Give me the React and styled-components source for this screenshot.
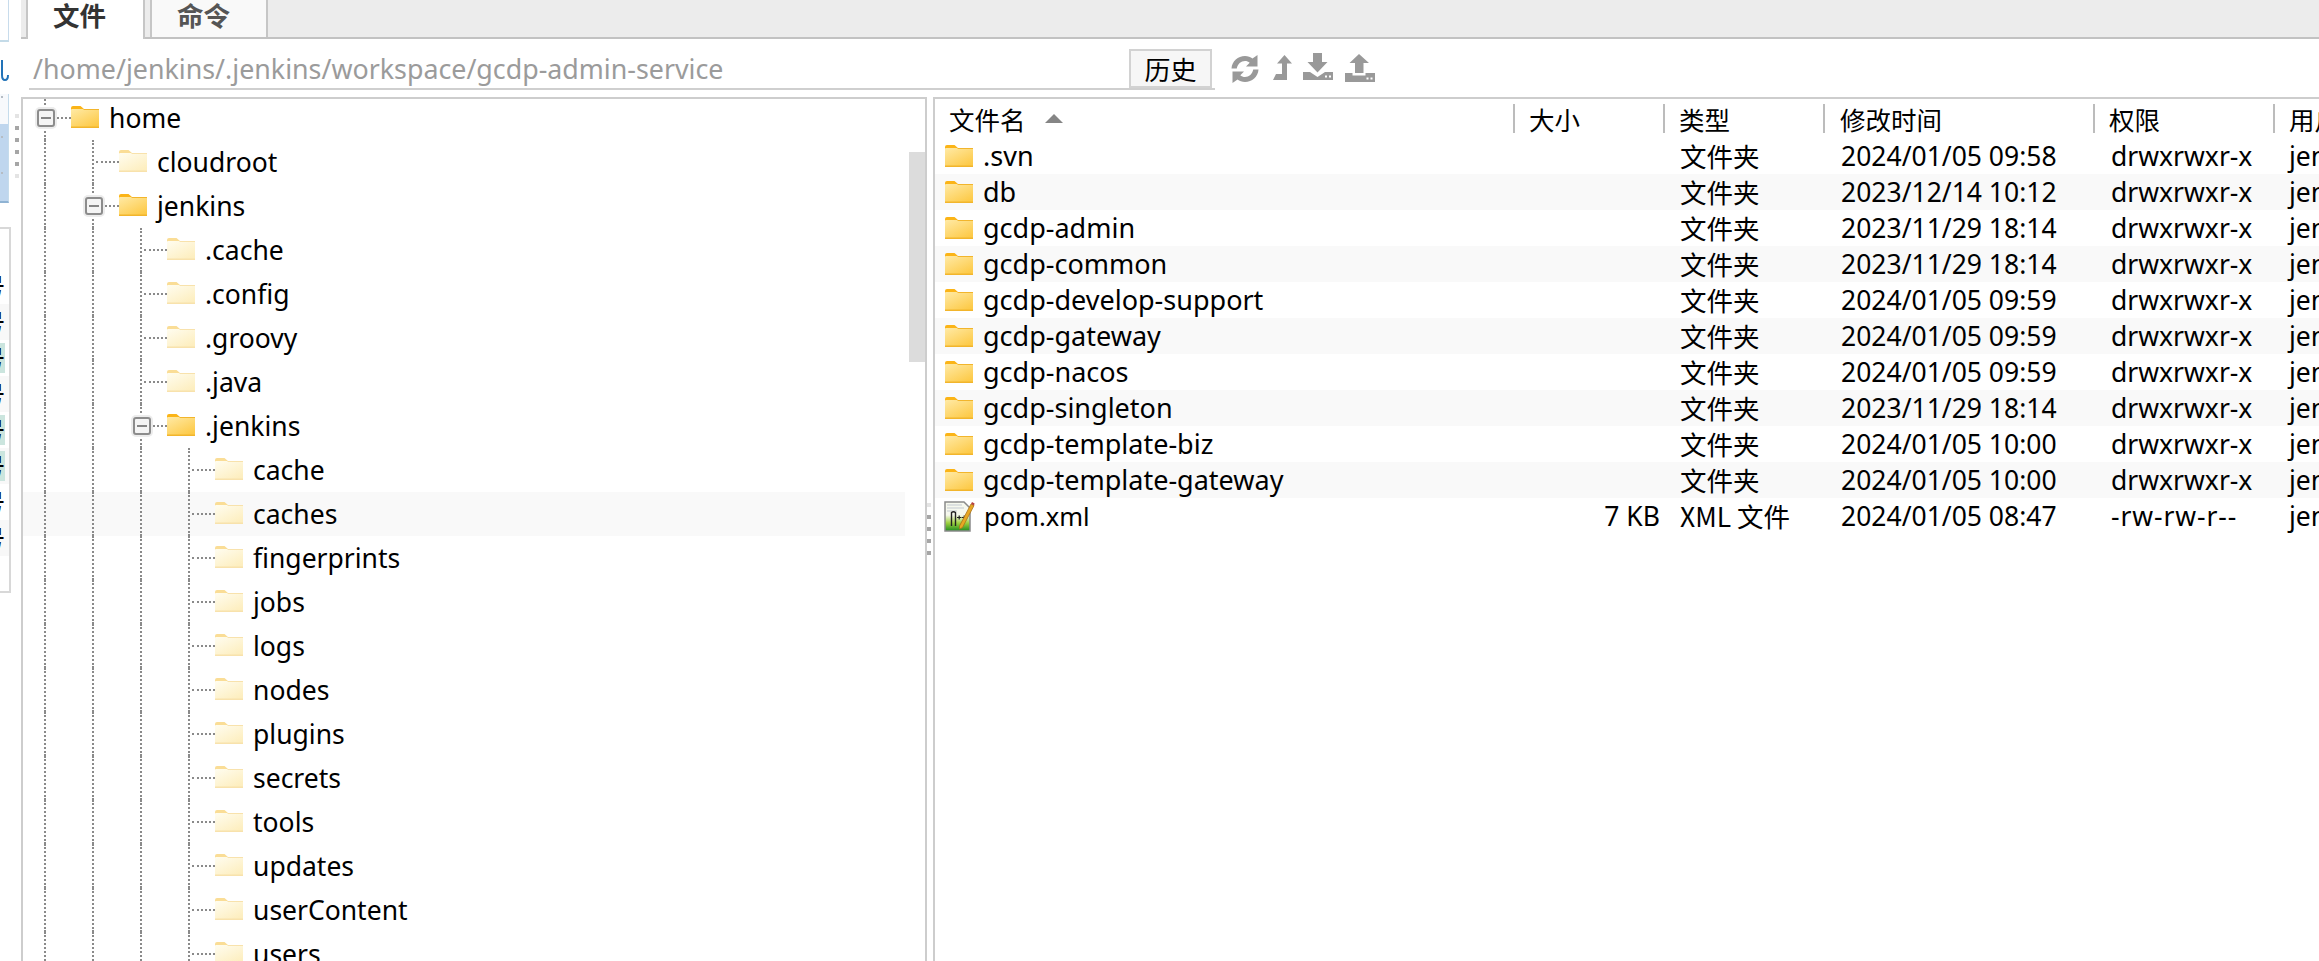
import React from 'react'
import styled, { createGlobalStyle } from 'styled-components'

const FONT = `"Noto Sans", "Noto Sans CJK SC", sans-serif`
const CJK = `"Noto Sans CJK SC", "Noto Sans", sans-serif`

const GlobalStyle = createGlobalStyle`
  html, body { margin: 0; padding: 0; height: 100%; overflow: hidden; background: #fff; }
  #root { height: 100%; }
`

const Shell = styled.div`
  display: flex;
  width: 2319px;
  height: 961px;
  overflow: hidden;
  background: #fff;
  font-family: ${FONT};
  color: #000;
`

// cut-off neighbour panel on the far left
const Strip = styled.aside`
  flex: none;
  width: 21px;
  display: flex;
`
const StripCol = styled.div`
  width: 11px;
  display: flex;
  flex-direction: column;
`
const TopCap = styled.div`
  width: 9px;
  height: 42px;
  box-sizing: border-box;
  border-bottom: 2px solid #c4dbe8;
  border-right: 1px solid #c8dcec;
`
const CutGlyph = styled.svg`
  display: block;
  margin-top: 18px;
  width: 9px;
  height: 22px;
`
const BluePanel = styled.div`
  position: relative;
  margin-top: 12px;
  width: 9px;
  height: 109px;
  box-sizing: border-box;
  background: linear-gradient(#f7f9fc 0 30px, #bfd6ee 30px);
  border-bottom: 2px solid #8fb3d3;
  border-right: 1px solid #c5dcec;
`
const Tick = styled.i`
  position: absolute;
  left: 1px;
  top: ${p => p.$top}px;
  width: 2px;
  height: 2px;
  background: #b5bcc4;
`
const CutList = styled.div`
  margin-top: 24px;
  width: 11px;
  height: 366px;
  box-sizing: border-box;
  padding-top: 39px;
  border: solid #d8d8d8;
  border-width: 2px 2px 2px 0;
  overflow: hidden;
`
const CutRow = styled.div`
  height: 36px;
  display: flex;
  align-items: center;
  justify-content: flex-end;
  overflow: hidden;
  font: 500 24px/30px ${CJK};
  background: ${p => (p.$odd ? '#f8f8f8' : '#fff')};
`
const CutText = styled.span`
  flex: none;
  margin-right: 4px;
  background: ${p => (p.$mark ? '#cbe5de' : 'transparent')};
`
const Grip = styled.div`
  display: flex;
  flex-direction: column;
  gap: 8px;
  margin: ${p => p.$top}px 0 0 ${p => p.$left}px;
`
const GripDot = styled.i`
  display: block;
  width: 4px;
  height: 4px;
  background: ${p => (p.$faint ? '#e4e4e4' : '#a6a6a6')};
`

const Main = styled.main`
  flex: 1;
  min-width: 0;
  display: flex;
  flex-direction: column;
`

const TabBar = styled.div`
  flex: none;
  height: 39px;
  box-sizing: border-box;
  display: flex;
  gap: 5px;
  padding-left: 5px;
  background: #ececec;
  border-bottom: 2px solid #c2c2c2;
`
const Tab = styled.div`
  width: ${p => p.$width}px;
  height: ${p => (p.$active ? 39 : 37)}px;
  box-sizing: border-box;
  padding-left: 25px;
  background: ${p => (p.$active ? '#fff' : '#f9f9f9')};
  border: solid #c6c6c6;
  border-width: 0 2px;
  ${p => (p.$active ? '' : 'border-bottom-width: 0;')}
  font: 700 26.5px/30px ${CJK};
  color: ${p => (p.$active ? '#333' : '#555')};
`

const PathRow = styled.div`
  flex: none;
  height: 58px;
  box-sizing: border-box;
  padding: 10px 0 0 8px;
  display: flex;
  align-items: flex-start;
`
const PathField = styled.div`
  width: 1186px;
  height: 41px;
  box-sizing: border-box;
  display: flex;
  align-items: center;
  padding: 0 3px 0 4px;
  border-bottom: 2px solid #cfcfcf;
`
const PathText = styled.span`
  flex: 1;
  font-size: 26.8px;
  line-height: 38px;
  color: #9b9b9b;
`
const HistoryBtn = styled.button`
  width: 83px;
  height: 39px;
  box-sizing: border-box;
  padding: 0;
  background: #f6f6f6;
  border: 2px solid #d2d2d2;
  font: 26px/32px ${CJK};
  color: #000;
`
const Tools = styled.div`
  display: flex;
  align-items: flex-start;
  margin: 6px 0 0 16px;
  color: #999;
`
const ToolIcon = styled.svg`
  display: block;
  flex: none;
  margin: ${p => p.$top}px 0 0 ${p => p.$left}px;
  fill: currentColor;
`

const Panes = styled.div`
  flex: 1;
  min-height: 0;
  display: flex;
`
const TreePane = styled.section`
  position: relative;
  flex: none;
  width: 906px;
  box-sizing: border-box;
  overflow: hidden;
  border: solid #cdcdcd;
  border-width: 2px 2px 0 2px;
`
const TreeRows = styled.div`
  margin-top: -3px;
  width: 882px;
`
const TreeRow = styled.div`
  height: 44px;
  box-sizing: border-box;
  display: flex;
  padding-left: 21px;
  background: ${p => (p.$hover ? '#f9f9f9' : 'transparent')};
`
const Guide = styled.span`
  flex: none;
  width: 48px;
  box-sizing: border-box;
  border-left: 2px dotted #8a8a8a;
`
const Node = styled.span`
  position: relative;
  flex: none;
  width: 27px;
  box-sizing: border-box;
  display: flex;
  align-items: center;
  border-left: 2px dotted #8a8a8a;
`
const Connector = styled.span`
  flex: none;
  width: 23px;
  margin-left: 2px;
  border-top: 2px dotted #8a8a8a;
`
const Toggle = styled.span`
  position: absolute;
  left: -9px;
  top: 13px;
  width: 18px;
  height: 18px;
  box-sizing: border-box;
  display: flex;
  align-items: center;
  justify-content: center;
  background: #f4f4f4;
  border: 2px solid #8c8c8c;
  border-radius: 3px;
  box-shadow: 0 0 0 2px #ececec;
  &::before {
    content: '';
    width: 10px;
    height: 2px;
    background: #858585;
  }
`
const TreeLabel = styled.span`
  margin-left: 10px;
  font-size: 26.5px;
  line-height: 44px;
  white-space: nowrap;
`
const TreeFolder = styled.span`
  flex: none;
  display: flex;
  align-items: center;
  margin-top: -3px;
`
const ScrollThumb = styled.div`
  position: absolute;
  right: 0;
  top: 53px;
  width: 16px;
  height: 210px;
  background: #dcdcdc;
`

const Splitter = styled.div`
  flex: none;
  width: 6px;
  display: flex;
  flex-direction: column;
  justify-content: center;
  gap: 8px;
`

const ListPane = styled.section`
  flex: 1;
  min-width: 0;
  box-sizing: border-box;
  overflow: hidden;
  border: solid #cdcdcd;
  border-width: 2px 0 0 2px;
`
const columns = '578px 150px 160px 270px 180px 46px'
const HeaderRow = styled.div`
  height: 39px;
  display: grid;
  grid-template-columns: ${columns};
  align-items: center;
`
const HeadCell = styled.div`
  height: 29px;
  box-sizing: border-box;
  display: flex;
  align-items: center;
  gap: 19px;
  padding-left: ${p => p.$pad}px;
  border-left: ${p => (p.$first ? 'none' : '2px solid #bcbcbc')};
  font: 25.5px/26px ${CJK};
  white-space: nowrap;
`
const SortArrow = styled.span`
  width: 0;
  height: 0;
  border: solid transparent;
  border-width: 0 9.5px 9px;
  border-bottom-color: #858585;
`
const FileRow = styled.div`
  height: 36px;
  display: grid;
  grid-template-columns: ${columns};
  align-items: center;
  background: ${p => (p.$odd ? '#f9f9f9' : '#fff')};
`
const NameCell = styled.div`
  display: flex;
  align-items: center;
  gap: ${p => (p.$file ? 9 : 10)}px;
  padding-left: ${p => (p.$file ? 9 : 10)}px;
  font-size: ${p => (p.$file ? 25.5 : 27)}px;
  line-height: 36px;
  white-space: nowrap;
`
const SizeCell = styled.div`
  padding-right: 3px;
  text-align: right;
  font-size: 26.5px;
  line-height: 36px;
`
const TextCell = styled.div`
  padding-left: ${p => p.$pad}px;
  font-size: 26.5px;
  line-height: 36px;
  letter-spacing: ${p => p.$track || 0}px;
  white-space: nowrap;
  overflow: hidden;
`
const TypeText = styled.span`
  font-family: ${CJK};
`

function Folder({ dim }) {
  const id = dim ? 'folderDim' : 'folderFull'
  const tab = dim ? '#fadd96' : '#fbb417'
  const from = dim ? '#fffdf0' : '#ffeaa6'
  const to = dim ? '#fdeebf' : '#fdca48'
  const edge = dim ? '#f8e2ac' : '#f2b52c'
  return (
    <svg width="28" height="22" viewBox="0 0 28 22" style={{ display: 'block', flex: 'none' }}>
      <defs>
        <linearGradient id={id} x1="0" y1="0" x2="0.7" y2="1">
          <stop offset="0" stopColor={from} />
          <stop offset="1" stopColor={to} />
        </linearGradient>
      </defs>
      <path d="M0 2Q0 0 2 0H9.5L13 3H28V6H0Z" fill={tab} />
      <rect y="3" x="0" width="28" height="19" rx="1" fill={`url(#${id})`} />
      <path d="M13 3H28V4H12Z" fill={edge} />
      <rect y="20.5" width="28" height="1.5" fill={edge} />
    </svg>
  )
}

function XmlIcon() {
  return (
    <svg width="31" height="33" viewBox="0 0 31 33" style={{ display: 'block', flex: 'none' }}>
      <defs>
        <linearGradient id="xmlPage" x1="0" y1="0" x2="0" y2="1">
          <stop offset="0.45" stopColor="#f6f8ee" />
          <stop offset="0.72" stopColor="#9fd13f" />
          <stop offset="1" stopColor="#1f8c1f" />
        </linearGradient>
      </defs>
      <path d="M1 2H20L26 8V31H1Z" fill="url(#xmlPage)" stroke="#8b8b8b" strokeWidth="1.5" />
      <path d="M3 5H18M3 8H20M3 11H13" stroke="#c3c9d1" strokeWidth="1" />
      <path d="M7.5 26V12.5Q9.5 11 11.5 12.5V26" fill="none" stroke="#222" strokeWidth="1.4" />
      <path d="M13 17.5H17.5M15.2 15.5V19.5M18 17.5H22.5M20.2 15.5V19.5" stroke="#222" strokeWidth="1.2" />
      <path d="M15.5 26L27 4L30 5.6L18.5 27.5L15.6 29Z" fill="#e8a723" stroke="#a9741a" strokeWidth="0.8" />
      <path d="M27 4L28 2L30.6 3.5L30 5.6Z" fill="#b8433f" />
    </svg>
  )
}

function RefreshIcon() {
  return (
    <ToolIcon $left={0} $top={0} width="28" height="28" viewBox="0 0 28 28" aria-label="refresh">
      <path d="M0.5 13.5C1 6 7 1 14 1C17 1 19.5 2 21.5 3.5L26.5 0V11.5H15L18.7 7.8C17.4 6.6 15.8 6 14 6C10 6 6.5 9 5.8 13.5Z" />
      <path d="M27.5 14.5C27 22 21 27 14 27C11 27 8.5 26 6.5 24.5L1.5 28V16.5H13L9.3 20.2C10.6 21.4 12.2 22 14 22C18 22 21.5 19 22.2 14.5Z" />
    </ToolIcon>
  )
}

function UpIcon() {
  return (
    <ToolIcon $left={14} $top={0} width="19" height="25" viewBox="0 0 19 25" aria-label="up">
      <path d="M11.5 0L19 8.5H14V25H0L3 19H9V8.5H4Z" />
    </ToolIcon>
  )
}

function DownloadIcon() {
  return (
    <ToolIcon $left={11} $top={-2} width="30" height="27" viewBox="0 0 30 27" aria-label="download">
      <path d="M10 0H19V9H24.5L14.5 19.5L4.5 9H10Z" />
      <path fillRule="evenodd" d="M0 19H7L14.5 24L22 19H30V27H0ZM22 22.5H24V24.5H22ZM26 22.5H28V24.5H26Z" />
    </ToolIcon>
  )
}

function UploadIcon() {
  return (
    <ToolIcon $left={12} $top={-1} width="30" height="28" viewBox="0 0 30 28" aria-label="upload">
      <path d="M14 0L24 9H18.5V19H10V9H4.5Z" />
      <path fillRule="evenodd" d="M0 19H7.5V21.5H20.5V19H30V28H0ZM21.5 23.5H23.5V25.5H21.5ZM25.5 23.5H27.5V25.5H25.5Z" />
    </ToolIcon>
  )
}

const treeNodes = [
  { name: 'home', depth: 0, open: true },
  { name: 'cloudroot', depth: 1, dim: true },
  { name: 'jenkins', depth: 1, open: true },
  { name: '.cache', depth: 2, dim: true },
  { name: '.config', depth: 2, dim: true },
  { name: '.groovy', depth: 2, dim: true },
  { name: '.java', depth: 2, dim: true },
  { name: '.jenkins', depth: 2, open: true },
  { name: 'cache', depth: 3, dim: true },
  { name: 'caches', depth: 3, dim: true, hover: true },
  { name: 'fingerprints', depth: 3, dim: true },
  { name: 'jobs', depth: 3, dim: true },
  { name: 'logs', depth: 3, dim: true },
  { name: 'nodes', depth: 3, dim: true },
  { name: 'plugins', depth: 3, dim: true },
  { name: 'secrets', depth: 3, dim: true },
  { name: 'tools', depth: 3, dim: true },
  { name: 'updates', depth: 3, dim: true },
  { name: 'userContent', depth: 3, dim: true },
  { name: 'users', depth: 3, dim: true },
]

const files = [
  ['.svn', '2024/01/05 09:58'],
  ['db', '2023/12/14 10:12'],
  ['gcdp-admin', '2023/11/29 18:14'],
  ['gcdp-common', '2023/11/29 18:14'],
  ['gcdp-develop-support', '2024/01/05 09:59'],
  ['gcdp-gateway', '2024/01/05 09:59'],
  ['gcdp-nacos', '2024/01/05 09:59'],
  ['gcdp-singleton', '2023/11/29 18:14'],
  ['gcdp-template-biz', '2024/01/05 10:00'],
  ['gcdp-template-gateway', '2024/01/05 10:00'],
]

const cutRows = [{}, { odd: true }, { mark: true }, { odd: true }, { mark: true }, { mark: true, odd: true }, {}, { odd: true }]

function App() {
  return (
    <Shell>
      <GlobalStyle />
      <Strip>
        <StripCol>
          <TopCap />
          <CutGlyph viewBox="0 0 9 22">
            <path d="M2 0V15Q2 20 5 20Q8 20 8 15" fill="none" stroke="#2273b8" strokeWidth="2" />
          </CutGlyph>
          <BluePanel>
            <Tick $top={2} />
            <Tick $top={42} />
            <Tick $top={78} />
          </BluePanel>
          <CutList>
            {cutRows.map((r, i) => (
              <CutRow key={i} $odd={r.odd}>
                <CutText $mark={r.mark}>号</CutText>
              </CutRow>
            ))}
          </CutList>
        </StripCol>
        <Grip $top={114} $left={4}>
          {[0, 1, 2, 3, 4, 5].map(i => (
            <GripDot key={i} $faint={i === 0 || i === 5} />
          ))}
        </Grip>
      </Strip>

      <Main>
        <TabBar>
          <Tab $active $width={119}>文件</Tab>
          <Tab $width={118}>命令</Tab>
        </TabBar>

        <PathRow>
          <PathField>
            <PathText>/home/jenkins/.jenkins/workspace/gcdp-admin-service</PathText>
            <HistoryBtn>历史</HistoryBtn>
          </PathField>
          <Tools>
            <RefreshIcon />
            <UpIcon />
            <DownloadIcon />
            <UploadIcon />
          </Tools>
        </PathRow>

        <Panes>
          <TreePane>
            <TreeRows>
              {treeNodes.map(n => (
                <TreeRow key={n.name} $hover={n.hover}>
                  {Array.from({ length: n.depth }, (_, i) => (
                    <Guide key={i} />
                  ))}
                  <Node>
                    <Connector />
                    {n.open && <Toggle />}
                  </Node>
                  <TreeFolder>
                    <Folder dim={n.dim} />
                  </TreeFolder>
                  <TreeLabel>{n.name}</TreeLabel>
                </TreeRow>
              ))}
            </TreeRows>
            <ScrollThumb />
          </TreePane>

          <Splitter>
            {[0, 1, 2, 3, 4].map(i => (
              <GripDot key={i} $faint={i === 0} />
            ))}
          </Splitter>

          <ListPane>
            <HeaderRow>
              <HeadCell $first $pad={14}>文件名<SortArrow /></HeadCell>
              <HeadCell $pad={14}>大小</HeadCell>
              <HeadCell $pad={14}>类型</HeadCell>
              <HeadCell $pad={15}>修改时间</HeadCell>
              <HeadCell $pad={14}>权限</HeadCell>
              <HeadCell $pad={14}>用户组</HeadCell>
            </HeaderRow>
            {files.map(([name, date], i) => (
              <FileRow key={name} $odd={i % 2 === 1}>
                <NameCell><Folder />{name}</NameCell>
                <SizeCell />
                <TextCell $pad={17}><TypeText>文件夹</TypeText></TextCell>
                <TextCell $pad={18}>{date}</TextCell>
                <TextCell $pad={18}>drwxrwxr-x</TextCell>
                <TextCell $pad={16}>jenkins</TextCell>
              </FileRow>
            ))}
            <FileRow>
              <NameCell $file><XmlIcon />pom.xml</NameCell>
              <SizeCell>7 KB</SizeCell>
              <TextCell $pad={17}><TypeText>XML 文件</TypeText></TextCell>
              <TextCell $pad={18}>2024/01/05 08:47</TextCell>
              <TextCell $pad={18} $track={0.9}>-rw-rw-r--</TextCell>
              <TextCell $pad={16}>jenkins</TextCell>
            </FileRow>
          </ListPane>
        </Panes>
      </Main>
    </Shell>
  )
}

export default App
